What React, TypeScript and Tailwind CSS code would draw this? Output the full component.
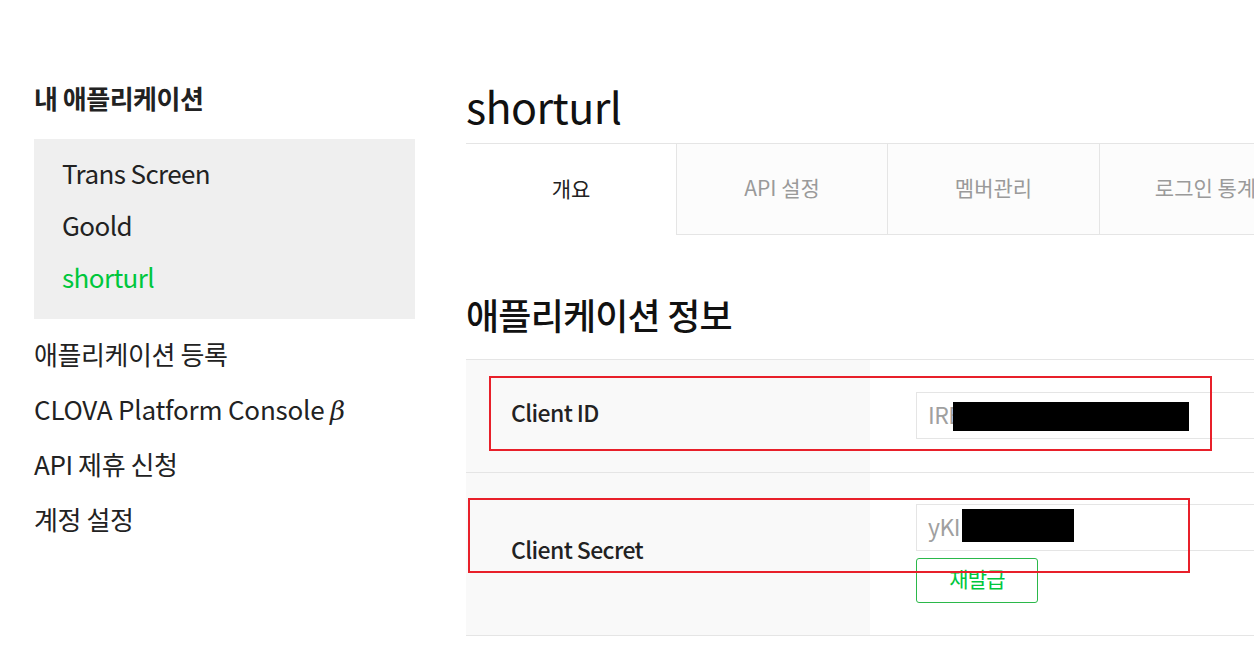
import React from "react";

const font = { fontFamily: '"Noto Sans CJK KR", "Noto Sans", sans-serif' };

export default function App() {
  return (
    <div
      className="relative w-[1254px] h-[652px] overflow-hidden bg-white text-[#222]"
      style={font}
    >
      <div className="flex pl-[34px] h-full">
        {/* Sidebar */}
        <aside className="w-[381px] shrink-0 pt-[82px]">
          <h2 className="h-[32px] leading-[32px] text-[26px] font-bold tracking-[-0.5px] text-[#222]">
            내 애플리케이션
          </h2>
          <div className="mt-[25px] h-[180px] bg-[#efefef] pt-[8px] pl-[28px]">
            <div className="h-[52px] leading-[52px] text-[26px] tracking-[-0.6px] text-[#222]">
              Trans Screen
            </div>
            <div className="h-[52px] leading-[52px] text-[26px] tracking-[-0.6px] text-[#222]">
              Goold
            </div>
            <div className="h-[52px] leading-[52px] text-[26px] tracking-[-0.6px] text-[#00c73c]">
              shorturl
            </div>
          </div>
          <ul className="mt-[7px]">
            <li className="h-[55px] leading-[55px] text-[26px] tracking-[-0.4px]">애플리케이션 등록</li>
            <li className="h-[55px] leading-[55px] text-[26px] tracking-[-0.2px]">
              CLOVA Platform Console{" "}
              <span className="italic" style={{ fontFamily: '"DejaVu Serif", serif' }}>β</span>
            </li>
            <li className="h-[55px] leading-[55px] text-[26px] tracking-[-0.4px]">API 제휴 신청</li>
            <li className="h-[55px] leading-[55px] text-[26px] tracking-[-0.4px]">계정 설정</li>
          </ul>
        </aside>

        {/* Main */}
        <main className="ml-[51px] flex-1 overflow-hidden pt-[80px]">
          <div className="w-[900px]">
            <h1 className="h-[50px] leading-[50px] text-[43px] tracking-[-0.6px] text-[#111]">shorturl</h1>
            <div className="mt-[13px] flex border-t border-[#e5e5e5] h-[92px]">
              <div className="w-[210px] flex items-center justify-center pb-[2px] text-[21px] text-[#222]">개요</div>
              <div className="w-[211px] flex items-center justify-center pb-[2px] text-[21px] text-[#9a9a9a] bg-[#fcfcfc] border-l border-b border-[#e5e5e5]">
                API 설정
              </div>
              <div className="w-[212px] flex items-center justify-center pb-[2px] text-[21px] text-[#9a9a9a] bg-[#fcfcfc] border-l border-b border-[#e5e5e5]">
                멤버관리
              </div>
              <div className="w-[212px] flex items-center justify-center pb-[2px] text-[21px] text-[#9a9a9a] bg-[#fcfcfc] border-l border-b border-[#e5e5e5]">
                로그인 통계
              </div>
            </div>

            <h2 className="mt-[57px] h-[44px] leading-[44px] text-[36px] font-medium tracking-[-0.8px] text-[#111]">
              애플리케이션 정보
            </h2>

            <div className="mt-[23px] border-t border-b border-[#e5e5e5]">
              <div className="flex h-[112px]">
                <div className="w-[404px] bg-[#f9f9f9] flex items-center pl-[45px] pb-[7px] text-[23px] font-medium tracking-[-0.6px] text-[#222]">
                  Client ID
                </div>
                <div className="flex-1 flex items-center pl-[46px] pb-[1px]">
                  <div className="relative w-[420px] h-[47px] border border-[#e5e5e5] bg-white pl-[11px] pb-[3px] flex items-center text-[23px] text-[#a0a0a0] tracking-[-0.6px]">
                    IRE
                    <div className="absolute left-[36px] top-[9px] w-[236px] h-[29px] bg-black" />
                  </div>
                </div>
              </div>
              <div className="flex h-[163px] border-t border-[#e5e5e5]">
                <div className="w-[404px] bg-[#f9f9f9] flex items-center pl-[45px] pb-[10px] text-[23px] font-medium tracking-[-0.6px] text-[#222]">
                  Client Secret
                </div>
                <div className="flex-1 pl-[46px] pt-[31px]">
                  <div className="relative w-[420px] h-[47px] border border-[#e5e5e5] bg-white pl-[11px] pb-[3px] flex items-center text-[23px] text-[#a0a0a0] tracking-[-0.6px]">
                    yKI
                    <div className="absolute left-[45px] top-[4px] w-[112px] h-[33px] bg-black" />
                  </div>
                  <button className="mt-[7px] w-[122px] h-[45px] border border-[#2bb84a] rounded-[3px] bg-white pb-[3px] text-[21px] text-[#00c73c] tracking-[-0.8px]">
                    재발급
                  </button>
                </div>
              </div>
            </div>
          </div>
        </main>
      </div>

      {/* red annotation boxes */}
      <div className="absolute left-[489px] top-[376px] w-[723px] h-[75px] border-2 border-[#e8202a]" />
      <div className="absolute left-[468px] top-[498px] w-[722px] h-[75px] border-2 border-[#e8202a]" />
    </div>
  );
}
